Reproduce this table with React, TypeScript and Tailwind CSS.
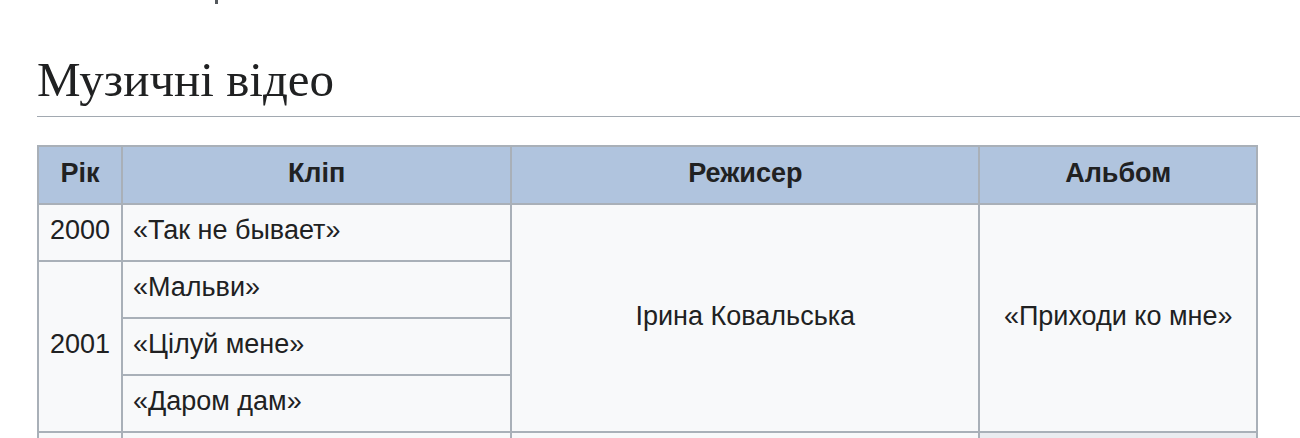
import React from 'react'

type Clip = { year?: string; yearSpan?: number; title: string }

const CLIPS: Clip[] = [
  { year: '2000', title: '«Так не бывает»' },
  { year: '2001', yearSpan: 3, title: '«Мальви»' },
  { title: '«Цілуй мене»' },
  { title: '«Даром дам»' },
]

const cell = 'border-2 border-[#a9b0b8] bg-[#f8f9fa] h-[57px] p-0 pb-[5px]'
const head = 'border-2 border-[#a9b0b8] bg-[#b0c4de] font-bold text-center pb-[4px]'

export default function App() {
  return (
    <div className="min-h-screen bg-white text-[#202122] pl-[37px] font-['Liberation_Sans',Arial,sans-serif]">
      {/* tail of the previous paragraph */}
      <div className="h-[4px] pl-[178px]">
        <div className="w-[3px] h-[4px] bg-[#54595d]" />
      </div>

      <h2 className="mt-[48px] pb-[8px] border-b border-[#a2a9b1] font-['Liberation_Serif','DejaVu_Serif',Georgia,serif] text-[49px] leading-[56px] font-normal">
        Музичні відео
      </h2>

      <table className="mt-[28px] border-collapse w-[1221px] text-[27px] leading-[32px]">
        <thead>
          <tr className="h-[58px]">
            <th className={`w-[84px] ${head}`}>Рік</th>
            <th className={`w-[390px] ${head}`}>Кліп</th>
            <th className={`w-[469px] ${head}`}>Режисер</th>
            <th className={`w-[278px] ${head}`}>Альбом</th>
          </tr>
        </thead>
        <tbody>
          {CLIPS.map((c, i) => (
            <tr key={c.title}>
              {c.year && (
                <td rowSpan={c.yearSpan} className={`${cell} text-center`}>
                  {c.year}
                </td>
              )}
              <td className={`${cell} pl-[10px] text-left`}>{c.title}</td>
              {i === 0 && (
                <>
                  <td rowSpan={4} className={`${cell} text-center`}>Ірина Ковальська</td>
                  <td rowSpan={4} className={`${cell} text-center`}>«Приходи ко мне»</td>
                </>
              )}
            </tr>
          ))}
          <tr>
            <td className={cell}>&nbsp;</td>
            <td className={cell}>&nbsp;</td>
            <td className={cell}>&nbsp;</td>
            <td className="border-2 border-[#a9b0b8] bg-[#eaecf0] h-[57px]">&nbsp;</td>
          </tr>
        </tbody>
      </table>
    </div>
  )
}
